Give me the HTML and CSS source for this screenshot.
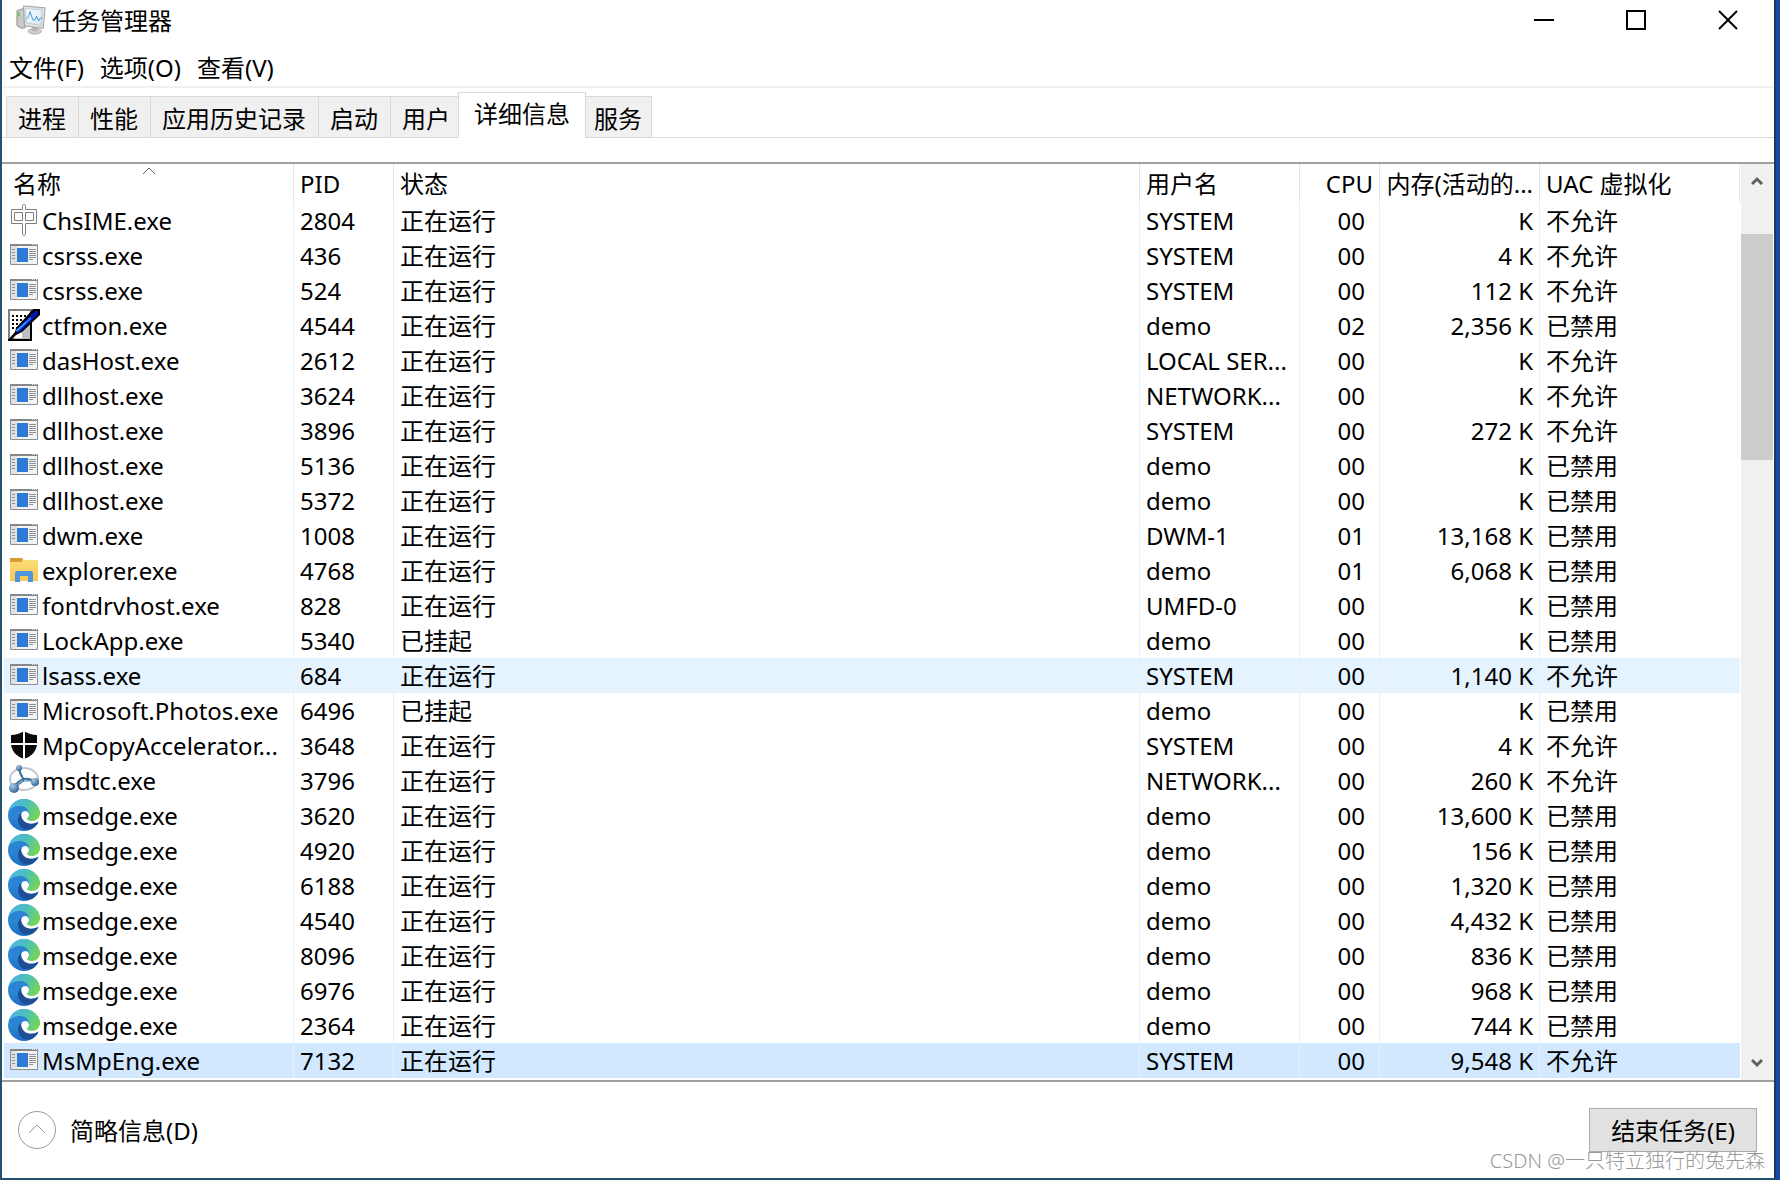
FILE: index.html
```html
<!DOCTYPE html>
<html lang="zh-CN">
<head>
<meta charset="utf-8">
<title>任务管理器</title>
<link rel="stylesheet" href="styles.css">
</head>
<body>
<svg class="sprite" aria-hidden="true">
  <defs>
    <linearGradient id="edge-blue" x1="0" y1="0" x2="0.3" y2="1"><stop offset="0" stop-color="#3aa0e0"/><stop offset="1" stop-color="#1f6fc4"/></linearGradient>
    <linearGradient id="edge-green" x1="0" y1="0.2" x2="1" y2="0.6"><stop offset="0" stop-color="#4db4ea"/><stop offset="0.5" stop-color="#4cc0b8"/><stop offset="1" stop-color="#76d653"/></linearGradient>
    <linearGradient id="folder" x1="0" y1="0" x2="0" y2="1"><stop offset="0" stop-color="#fddc7c"/><stop offset="1" stop-color="#f5c74f"/></linearGradient>
    <linearGradient id="screen" x1="0" y1="0" x2="1" y2="1"><stop offset="0" stop-color="#ffffff"/><stop offset="1" stop-color="#cfe6f6"/></linearGradient>
    <radialGradient id="ball" cx="0.35" cy="0.3" r="0.8"><stop offset="0" stop-color="#a9cbe4"/><stop offset="1" stop-color="#23588c"/></radialGradient>
  </defs>
  <symbol id="i-app" viewBox="0 0 32 32">
    <path fill="#f3f3f3" stroke="#8c8f92" d="M2.500 5.500h27v20h-27z"/>
    <path fill="#dfe1e3" d="M3 7h6v18H3z"/>
    <path fill="#85888b" d="M2 5h28v2H2z"/>
    <path fill="#dfe1e3" d="M24 5h1v1h-1zM26 5h1v1h-1zM28 5h1v1h-1z"/>
    <path fill="#2d7bd4" d="M9 9h11v14H9z"/>
    <path fill="#8d9093" d="M4 10h3v1H4zM4 13h3v1H4zM4 16h3v1H4zM4 19h3v1H4zM21 10h7v1h-7zM21 12h7v1h-7zM21 14h7v1h-7zM21 16h7v1h-7zM21 18h7v1h-7zM21 20h4v1h-4z"/>
  </symbol>
  <symbol id="i-ime" viewBox="0 0 32 32">
    <path fill="#fff" stroke="#808080" d="M14.500 5.500V1.500q0-1 1.500-1t1.500 1v4h11v14h-11v11q-1.500 2-3 0v-11h-11v-14z"/>
    <path fill="#fff" stroke="#808080" d="M6.500 8.500h8v8h-8zM17.500 8.500h8v8h-8z"/>
  </symbol>
  <symbol id="i-pen" viewBox="0 0 32 32">
    <path fill="#fff" stroke="#808080" stroke-width="2" d="M1 1h22v29H1z"/>
    <path fill="#000" d="M22 12h2v20H0v-2h22z"/>
    <path fill="none" stroke="#000" stroke-width="2" stroke-dasharray="2 2" d="M4 7h18M4 11h16M4 15h12M4 19h8"/>
    <path fill="#c0c0c0" d="M12 24l10-10v16H6z"/>
    <path fill="#fff" d="M8 26l6-3v6H8z"/>
    <path fill="#000" d="M25 0h7v6L14 23l-6 3-5 5H0l7-8 1-4z"/>
    <path fill="#0018b0" d="M27 2h3v3L13 22l-5 2 1-4z"/>
    <path fill="none" stroke="#2b66ff" stroke-width="2" d="M9 22L23 9"/>
    <path fill="none" stroke="#24dfff" stroke-width="1" d="M8 22l10-9"/>
  </symbol>
  <symbol id="i-folder" viewBox="0 0 32 32">
    <path fill="#d79b2e" d="M2 4h12l2 3v4H2z"/>
    <path fill="url(#folder)" d="M2 8h11l2-2h15v21H2z"/>
    <path fill="#4f96dc" d="M7 19q0-2 2-2h14q2 0 2 2v9h-5v-6h-8v6H7z"/>
  </symbol>
  <symbol id="i-shield" viewBox="0 0 32 32">
    <path fill="#08090b" d="M16 2q6 4 13 4v8q0 11-13 16Q3 25 3 14V6q7 0 13-4z"/>
    <path stroke="#fff" stroke-width="2" d="M16 1v30M2 15h28"/>
  </symbol>
  <symbol id="i-nodes" viewBox="0 0 32 32">
    <ellipse cx="16" cy="15" rx="14" ry="11" fill="none" stroke="#c3c6d2" stroke-width="2"/>
    <path fill="none" stroke="#3d6f9c" stroke-width="2" d="M11 5q2 8 5 10M6 23q5-7 10-8M16 15q6-1 11 3"/>
    <path fill="none" stroke="#3d6f9c" d="M11 5l5 11q-5 5-9 9M8 22q8-8 18-4"/>
    <circle cx="11" cy="4" r="3" fill="url(#ball)"/>
    <circle cx="27" cy="18" r="4" fill="url(#ball)"/>
    <circle cx="6" cy="24" r="5" fill="url(#ball)"/>
  </symbol>
  <symbol id="i-edge" viewBox="0 0 32 32">
    <circle cx="16" cy="16" r="16" fill="url(#edge-blue)"/>
    <path fill="#fff" d="M14 14q2-3 5 0v8l6 3 7-3V16z"/>
    <path fill="url(#edge-green)" d="M1 12C3 4 9 0 16 0c9 0 16 7 16 14 0 5-4 8-8 8-3 0-5-1-5-2s2-2 2-5c0-4-4-7-9-7-4 0-8 1-11 4z"/>
    <path fill="#2c83d4" d="M1 12c3-4 7-5 11-5 5 0 9 3 9 8-1-2-3-3-5-3-4 1-7 5-7 9z"/>
    <path fill="#fff" d="M18 12c-4 0-5 3-5 5 0 5 5 8 9 8 3 0 5-1 7-2l-3-1c-4 1-8-1-7-3 2-2 2-4 1-6z"/>
    <path fill="#1c4f95" d="M13 14c-4 3-4 10 0 14 3 3 8 3 11 2 3-2 5-4 6-6v-1c-8 4-17 1-17-9z"/>
  </symbol>
</svg>

<div class="window">
  <header class="titlebar">
    <svg class="title-icon" viewBox="0 0 32 32" aria-hidden="true">
      <path fill="#c9c9c9" stroke="#8d8d8d" d="M1 6l6-2 3 1v19l-4 1-5-3z"/>
      <path fill="#69c04c" d="M2 8h2v4H2z"/>
      <ellipse cx="20" cy="28" rx="7" ry="3" fill="#cfcfcf" stroke="#aaa"/>
      <path fill="#b5b5b5" d="M17 22h6v6h-6z"/>
      <path fill="#e4e4e4" stroke="#9b9b9b" d="M8 1l23 2-2 22-20-3z"/>
      <path fill="url(#screen)" stroke="#b9c7d1" d="M10 4l18 1-1 17-16-3z"/>
      <path fill="none" stroke="#3d92cc" d="M11 15l2-2 2-6 3 9 2 0 2-4 2 5 2-3h2"/>
    </svg>
    <h1>任务管理器</h1>
    <div class="captions">
      <button type="button" aria-label="最小化"><svg viewBox="0 0 20 20"><path d="M0 10h20"/></svg></button>
      <button type="button" aria-label="最大化"><svg viewBox="0 0 20 20"><path d="M1 1h18v18H1z"/></svg></button>
      <button type="button" aria-label="关闭"><svg viewBox="0 0 20 20"><path d="M1 1l18 18M19 1L1 19"/></svg></button>
    </div>
  </header>

  <nav class="menubar">
    <button type="button">文件(F)</button>
    <button type="button">选项(O)</button>
    <button type="button">查看(V)</button>
  </nav>

  <div class="tabs" role="tablist">
    <button type="button" role="tab">进程</button>
    <button type="button" role="tab">性能</button>
    <button type="button" role="tab">应用历史记录</button>
    <button type="button" role="tab">启动</button>
    <button type="button" role="tab" class="snug">用户</button>
    <button type="button" role="tab" class="active" aria-selected="true">详细信息</button>
    <button type="button" role="tab" class="tight">服务</button>
  </div>

  <main class="panel">
    <table>
      <colgroup><col class="c-name"><col class="c-pid"><col><col class="c-user"><col class="c-cpu"><col class="c-mem"><col class="c-uac"></colgroup>
      <thead>
        <tr>
          <th class="first" aria-sort="ascending">名称<svg class="sort" viewBox="0 0 14 8" aria-hidden="true"><path d="M1 7l6-6 6 6"/></svg></th>
          <th>PID</th><th>状态</th><th>用户名</th><th class="num">CPU</th><th class="num">内存(活动的...</th><th>UAC 虚拟化</th>
        </tr>
      </thead>
      <tbody>
        <tr><td class="name"><svg><use href="#i-ime"/></svg>ChsIME.exe</td><td>2804</td><td>正在运行</td><td>SYSTEM</td><td class="cpu">00</td><td class="num">K</td><td>不允许</td></tr>
        <tr><td class="name"><svg><use href="#i-app"/></svg>csrss.exe</td><td>436</td><td>正在运行</td><td>SYSTEM</td><td class="cpu">00</td><td class="num">4 K</td><td>不允许</td></tr>
        <tr><td class="name"><svg><use href="#i-app"/></svg>csrss.exe</td><td>524</td><td>正在运行</td><td>SYSTEM</td><td class="cpu">00</td><td class="num">112 K</td><td>不允许</td></tr>
        <tr><td class="name"><svg><use href="#i-pen"/></svg>ctfmon.exe</td><td>4544</td><td>正在运行</td><td>demo</td><td class="cpu">02</td><td class="num">2,356 K</td><td>已禁用</td></tr>
        <tr><td class="name"><svg><use href="#i-app"/></svg>dasHost.exe</td><td>2612</td><td>正在运行</td><td>LOCAL SER...</td><td class="cpu">00</td><td class="num">K</td><td>不允许</td></tr>
        <tr><td class="name"><svg><use href="#i-app"/></svg>dllhost.exe</td><td>3624</td><td>正在运行</td><td>NETWORK...</td><td class="cpu">00</td><td class="num">K</td><td>不允许</td></tr>
        <tr><td class="name"><svg><use href="#i-app"/></svg>dllhost.exe</td><td>3896</td><td>正在运行</td><td>SYSTEM</td><td class="cpu">00</td><td class="num">272 K</td><td>不允许</td></tr>
        <tr><td class="name"><svg><use href="#i-app"/></svg>dllhost.exe</td><td>5136</td><td>正在运行</td><td>demo</td><td class="cpu">00</td><td class="num">K</td><td>已禁用</td></tr>
        <tr><td class="name"><svg><use href="#i-app"/></svg>dllhost.exe</td><td>5372</td><td>正在运行</td><td>demo</td><td class="cpu">00</td><td class="num">K</td><td>已禁用</td></tr>
        <tr><td class="name"><svg><use href="#i-app"/></svg>dwm.exe</td><td>1008</td><td>正在运行</td><td>DWM-1</td><td class="cpu">01</td><td class="num">13,168 K</td><td>已禁用</td></tr>
        <tr><td class="name"><svg><use href="#i-folder"/></svg>explorer.exe</td><td>4768</td><td>正在运行</td><td>demo</td><td class="cpu">01</td><td class="num">6,068 K</td><td>已禁用</td></tr>
        <tr><td class="name"><svg><use href="#i-app"/></svg>fontdrvhost.exe</td><td>828</td><td>正在运行</td><td>UMFD-0</td><td class="cpu">00</td><td class="num">K</td><td>已禁用</td></tr>
        <tr><td class="name"><svg><use href="#i-app"/></svg>LockApp.exe</td><td>5340</td><td>已挂起</td><td>demo</td><td class="cpu">00</td><td class="num">K</td><td>已禁用</td></tr>
        <tr class="hover"><td class="name"><svg><use href="#i-app"/></svg>lsass.exe</td><td>684</td><td>正在运行</td><td>SYSTEM</td><td class="cpu">00</td><td class="num">1,140 K</td><td>不允许</td></tr>
        <tr><td class="name"><svg><use href="#i-app"/></svg>Microsoft.Photos.exe</td><td>6496</td><td>已挂起</td><td>demo</td><td class="cpu">00</td><td class="num">K</td><td>已禁用</td></tr>
        <tr><td class="name"><svg><use href="#i-shield"/></svg>MpCopyAccelerator...</td><td>3648</td><td>正在运行</td><td>SYSTEM</td><td class="cpu">00</td><td class="num">4 K</td><td>不允许</td></tr>
        <tr><td class="name"><svg><use href="#i-nodes"/></svg>msdtc.exe</td><td>3796</td><td>正在运行</td><td>NETWORK...</td><td class="cpu">00</td><td class="num">260 K</td><td>不允许</td></tr>
        <tr><td class="name"><svg><use href="#i-edge"/></svg>msedge.exe</td><td>3620</td><td>正在运行</td><td>demo</td><td class="cpu">00</td><td class="num">13,600 K</td><td>已禁用</td></tr>
        <tr><td class="name"><svg><use href="#i-edge"/></svg>msedge.exe</td><td>4920</td><td>正在运行</td><td>demo</td><td class="cpu">00</td><td class="num">156 K</td><td>已禁用</td></tr>
        <tr><td class="name"><svg><use href="#i-edge"/></svg>msedge.exe</td><td>6188</td><td>正在运行</td><td>demo</td><td class="cpu">00</td><td class="num">1,320 K</td><td>已禁用</td></tr>
        <tr><td class="name"><svg><use href="#i-edge"/></svg>msedge.exe</td><td>4540</td><td>正在运行</td><td>demo</td><td class="cpu">00</td><td class="num">4,432 K</td><td>已禁用</td></tr>
        <tr><td class="name"><svg><use href="#i-edge"/></svg>msedge.exe</td><td>8096</td><td>正在运行</td><td>demo</td><td class="cpu">00</td><td class="num">836 K</td><td>已禁用</td></tr>
        <tr><td class="name"><svg><use href="#i-edge"/></svg>msedge.exe</td><td>6976</td><td>正在运行</td><td>demo</td><td class="cpu">00</td><td class="num">968 K</td><td>已禁用</td></tr>
        <tr><td class="name"><svg><use href="#i-edge"/></svg>msedge.exe</td><td>2364</td><td>正在运行</td><td>demo</td><td class="cpu">00</td><td class="num">744 K</td><td>已禁用</td></tr>
        <tr class="selected"><td class="name"><svg><use href="#i-app"/></svg>MsMpEng.exe</td><td>7132</td><td>正在运行</td><td>SYSTEM</td><td class="cpu">00</td><td class="num">9,548 K</td><td>不允许</td></tr>
      </tbody>
    </table>
    <div class="scrollbar">
      <button type="button" aria-label="向上滚动"><svg viewBox="0 0 12 10"><path d="M1 8l5-5 5 5"/></svg></button>
      <div class="track"><div class="thumb"></div></div>
      <button type="button" aria-label="向下滚动"><svg viewBox="0 0 12 10"><path d="M1 2l5 5 5-5"/></svg></button>
    </div>
  </main>

  <footer>
    <button type="button" class="fewer">
      <svg viewBox="0 0 38 38" aria-hidden="true"><circle cx="19" cy="19" r="18.500"/><path d="M11 22l8-8 8 8"/></svg>
      <span>简略信息(D)</span>
    </button>
    <button type="button" class="end">结束任务(E)</button>
  </footer>
  <span class="watermark">CSDN @一只特立独行的兔先森</span>
</div>
</body>
</html>
```
FILE: styles.css
```css
* { box-sizing: border-box; }

body {
  margin: 0;
  min-height: 100vh;
  display: flex;
  background: #1749a2;
  color: #000;
  font-family: "Noto Sans", "Noto Sans CJK SC", sans-serif;
  font-size: 24px;
  font-weight: 400;
  line-height: 35px;
}

button {
  margin: 0;
  padding: 0;
  border: 0;
  background: none;
  color: inherit;
  font: inherit;
  white-space: nowrap;
}

svg { display: block; flex: none; }

.sprite { position: absolute; width: 0; height: 0; }

.window {
  position: relative;
  flex: 1;
  min-width: 0;
  display: flex;
  flex-direction: column;
  margin-right: 4px;
  border: 2px solid #24506d;
  border-top: 0;
  border-right-color: #1d3a63;
  background: #fff;
}

.titlebar {
  display: flex;
  align-items: center;
  height: 40px;
  padding-left: 14px;
}
.title-icon { width: 30px; height: 30px; }
h1 { margin: 0 0 0 6px; font-size: 24px; font-weight: inherit; }
.captions { display: flex; margin-left: auto; }
.captions button {
  display: flex;
  align-items: center;
  justify-content: center;
  width: 92px;
  height: 40px;
}
.captions svg { width: 20px; height: 20px; fill: none; stroke: #000; stroke-width: 2; }

.menubar {
  display: flex;
  gap: 16px;
  height: 48px;
  padding: 8px 0 0 7px;
  align-items: center;
  border-bottom: 2px solid #f0f0f0;
}

.tabs {
  display: flex;
  align-items: flex-end;
  height: 50px;
  padding-left: 4px;
  border-bottom: 1px solid #d9d9d9;
}
.tabs button {
  height: 41px;
  padding: 2px 12px 0 11px;
  border: 1px solid #d9d9d9;
  border-width: 1px 0 0 1px;
  background: #f0f0f0;
}
.tabs .snug { padding-right: 8px; }
.tabs .active {
  height: 46px;
  margin-bottom: -1px;
  padding: 0 15px 4px;
  border-width: 1px 1px 0;
  background: #fff;
}
.tabs .tight { padding: 2px 9px 0 8px; border-width: 1px 1px 0 0; }

.panel {
  display: flex;
  gap: 1px;
  margin-top: 24px;
  border: solid #a0a0a0;
  border-width: 2px 0;
  padding: 0 1px 0 2px;
}

table {
  flex: 1;
  min-width: 0;
  table-layout: fixed;
  border-collapse: separate;
  border-spacing: 0;
  margin-bottom: 2px;
}
.c-name { width: 290px; }
.c-pid { width: 100px; }
.c-user, .c-mem { width: 160px; }
.c-cpu { width: 80px; }
.c-uac { width: 200px; }

th, td {
  height: 35px;
  padding: 0 6px;
  border-right: 1px solid #e8f1fa;
  text-align: left;
  font-weight: inherit;
  white-space: nowrap;
  overflow: hidden;
}
th {
  position: relative;
  height: 39px;
  border-right-color: #e5e5e5;
}
th.first { padding-left: 9px; }
td:last-child { border-right-color: transparent; }
.num { text-align: right; }
.cpu { padding-right: 14px; text-align: right; }
.name { padding: 0 0 0 4px; }
.name svg { display: inline-block; width: 32px; height: 32px; margin: 1px 2px 0 0; vertical-align: top; }
.hover { background: #e5f3ff; }
.selected { background: #d1e8ff; }
.sort {
  position: absolute;
  top: 3px;
  left: 50%;
  width: 14px;
  height: 8px;
  margin-left: -7px;
  fill: none;
  stroke: #606060;
}

.scrollbar {
  display: flex;
  flex-direction: column;
  width: 32px;
  background: #f0f0f0;
}
.scrollbar button {
  display: flex;
  align-items: center;
  justify-content: center;
  height: 34px;
}
.scrollbar svg { width: 12px; height: 10px; fill: none; stroke: #606060; stroke-width: 3; }
.track { flex: 1; padding-top: 36px; }
.thumb { height: 226px; background: #cdcdcd; }

footer {
  display: flex;
  flex: 1;
  align-items: center;
  justify-content: space-between;
  padding: 0 17px 0 16px;
}
.fewer { display: flex; align-items: center; gap: 14px; }
.fewer svg { width: 38px; height: 38px; fill: none; stroke: #999; }
.end {
  width: 168px;
  height: 44px;
  border: 1px solid #adadad;
  background: #e1e1e1;
}
.watermark {
  position: absolute;
  right: 9px;
  bottom: 2px;
  font-size: 20px;
  line-height: 30px;
  font-weight: 300;
  color: #999;
}
```
